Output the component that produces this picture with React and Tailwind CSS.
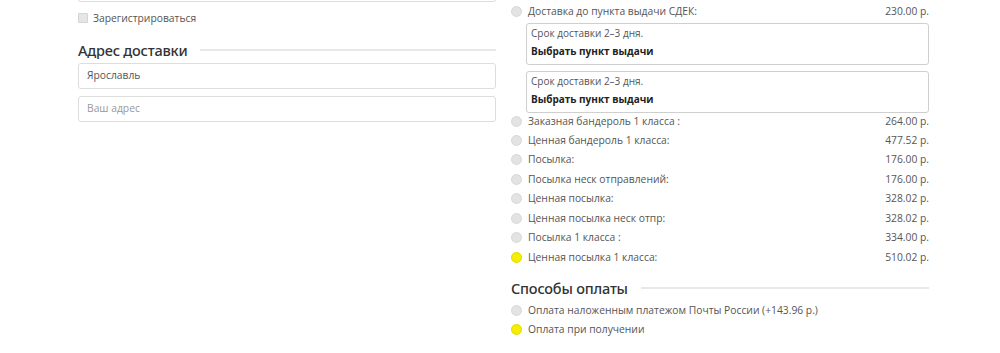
import React from 'react';

const shipping = [
    { name: 'Заказная бандероль 1 класса :', price: '264.00 р.' },
    { name: 'Ценная бандероль 1 класса:', price: '477.52 р.' },
    { name: 'Посылка:', price: '176.00 р.' },
    { name: 'Посылка неск отправлений:', price: '176.00 р.' },
    { name: 'Ценная посылка:', price: '328.02 р.' },
    { name: 'Ценная посылка неск отпр:', price: '328.02 р.' },
    { name: 'Посылка 1 класса :', price: '334.00 р.' },
    { name: 'Ценная посылка 1 класса:', price: '510.02 р.', active: true },
];

const Radio = ({ active }) => (
    <span className={`inline-block w-[11px] h-[11px] rounded-full shrink-0 border ${active ? 'bg-[#f5ee00] border-[#e0d800]' : 'bg-[#e3e3e3] border-[#d8d8d8]'}`} />
);

const Heading = ({ children }) => (
    <div className="flex items-center gap-[13px] h-[20px]">
        <h3 className="text-[14.5px] font-medium text-[#333] leading-[20px] tracking-[-0.2px] [font-family:'Noto_Sans',sans-serif] whitespace-nowrap">{children}</h3>
        <div className="flex-1 h-[2px] bg-[#e8e8e8]" />
    </div>
);

const PickupBox = () => (
    <div className="ml-[15px] border border-[#cfcfcf] rounded-[3px] h-[42px] pl-[4px] flex flex-col text-[10px]">
        <p className="h-[18px] leading-[18px] text-[#555]">Срок доставки 2–3 дня.</p>
        <p className="h-[18px] leading-[18px] font-bold text-[#222]">Выбрать пункт выдачи</p>
    </div>
);

const Row = ({ name, price, active }) => (
    <div className="flex items-center h-[19.43px] leading-[19px]">
        <Radio active={active} />
        <span className="ml-[6px] flex-1">{name}</span>
        {price && <span>{price}</span>}
    </div>
);

export default function App() {
    return (
        <div className="w-[1000px] h-[353px] bg-white overflow-hidden text-[10.3px] text-[#555] [font-family:'Open_Sans',sans-serif]">
            <div className="flex gap-[14px] pl-[78px] pr-[71px]">
                <div className="w-[418px]">
                    <div className="h-[3px] -mt-[1px] border border-t-0 border-[#ddd] rounded-b-[3px]" />
                    <div className="flex items-center mt-[11px] h-[10px]">
                        <span className="w-[10px] h-[10px] bg-[#e6e6e6] border border-[#d4d4d4] rounded-[1px]" />
                        <span className="ml-[5px] leading-[10px]">Зарегистрироваться</span>
                    </div>
                    <div className="mt-[17px]">
                        <Heading>Адрес доставки</Heading>
                    </div>
                    <div className="mt-[3px] h-[26px] border border-[#ddd] rounded-[3px] flex items-center pl-[8px] text-[#555]">Ярославль</div>
                    <div className="mt-[7px] h-[26px] border border-[#ddd] rounded-[3px] flex items-center pl-[8px] text-[#999]">Ваш адрес</div>
                </div>
                <div className="flex-1 pl-[1px]">
                    <div className="mt-[1.5px]">
                        <Row name="Доставка до пункта выдачи СДЕК:" price="230.00 р." />
                    </div>
                    <div className="mt-[2px]">
                        <PickupBox />
                    </div>
                    <div className="mt-[6px]">
                        <PickupBox />
                    </div>
                    <div className="mt-[-1.5px]">
                        {shipping.map(s => <Row key={s.name} {...s} />)}
                    </div>
                    <div className="mt-[11px]">
                        <Heading>Способы оплаты</Heading>
                    </div>
                    <div className="mt-[3px]">
                        <Row name="Оплата наложенным платежом Почты России (+143.96 р.)" />
                        <Row name="Оплата при получении" active />
                    </div>
                </div>
            </div>
        </div>
    );
}
